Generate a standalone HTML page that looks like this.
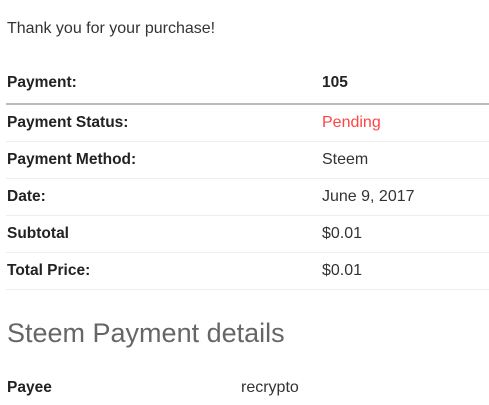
<!DOCTYPE html>
<html><head><style>
body{margin:0;width:489px;height:405px;background:#fff;font-family:"Liberation Sans",sans-serif;font-size:16px;color:#333;position:relative;overflow:hidden}
.t{position:absolute;white-space:nowrap;line-height:18px}
.b{font-weight:bold;color:#222;font-size:15.5px}
.l{position:absolute;left:6px;width:483px;height:1px;background:#eee}
</style></head><body>
<div class="t" style="left:7px;top:20px;color:#333">Thank you for your purchase!</div>
<div class="t b" style="left:7px;top:74px">Payment:</div>
<div class="t b" style="left:322px;top:74px">105</div>
<div style="position:absolute;left:6px;top:103px;width:483px;height:2px;background:#bbb"></div>
<div class="t b" style="left:7px;top:114px">Payment Status:</div>
<div class="t" style="left:322px;top:114px;color:#f44">Pending</div>
<div class="l" style="top:141px"></div>
<div class="t b" style="left:7px;top:151px">Payment Method:</div>
<div class="t" style="left:322px;top:151px">Steem</div>
<div class="l" style="top:178px"></div>
<div class="t b" style="left:7px;top:188px">Date:</div>
<div class="t" style="left:322px;top:188px">June 9, 2017</div>
<div class="l" style="top:215px"></div>
<div class="t b" style="left:7px;top:225px">Subtotal</div>
<div class="t" style="left:322px;top:225px">$0.01</div>
<div class="l" style="top:252px"></div>
<div class="t b" style="left:7px;top:262px">Total Price:</div>
<div class="t" style="left:322px;top:262px">$0.01</div>
<div class="l" style="top:289px"></div>
<div class="t" style="left:7px;top:317px;font-size:27px;line-height:32px;color:#666">Steem Payment details</div>
<div class="t b" style="left:7px;top:379px">Payee</div>
<div class="t" style="left:241px;top:379px">recrypto</div>
</body></html>
